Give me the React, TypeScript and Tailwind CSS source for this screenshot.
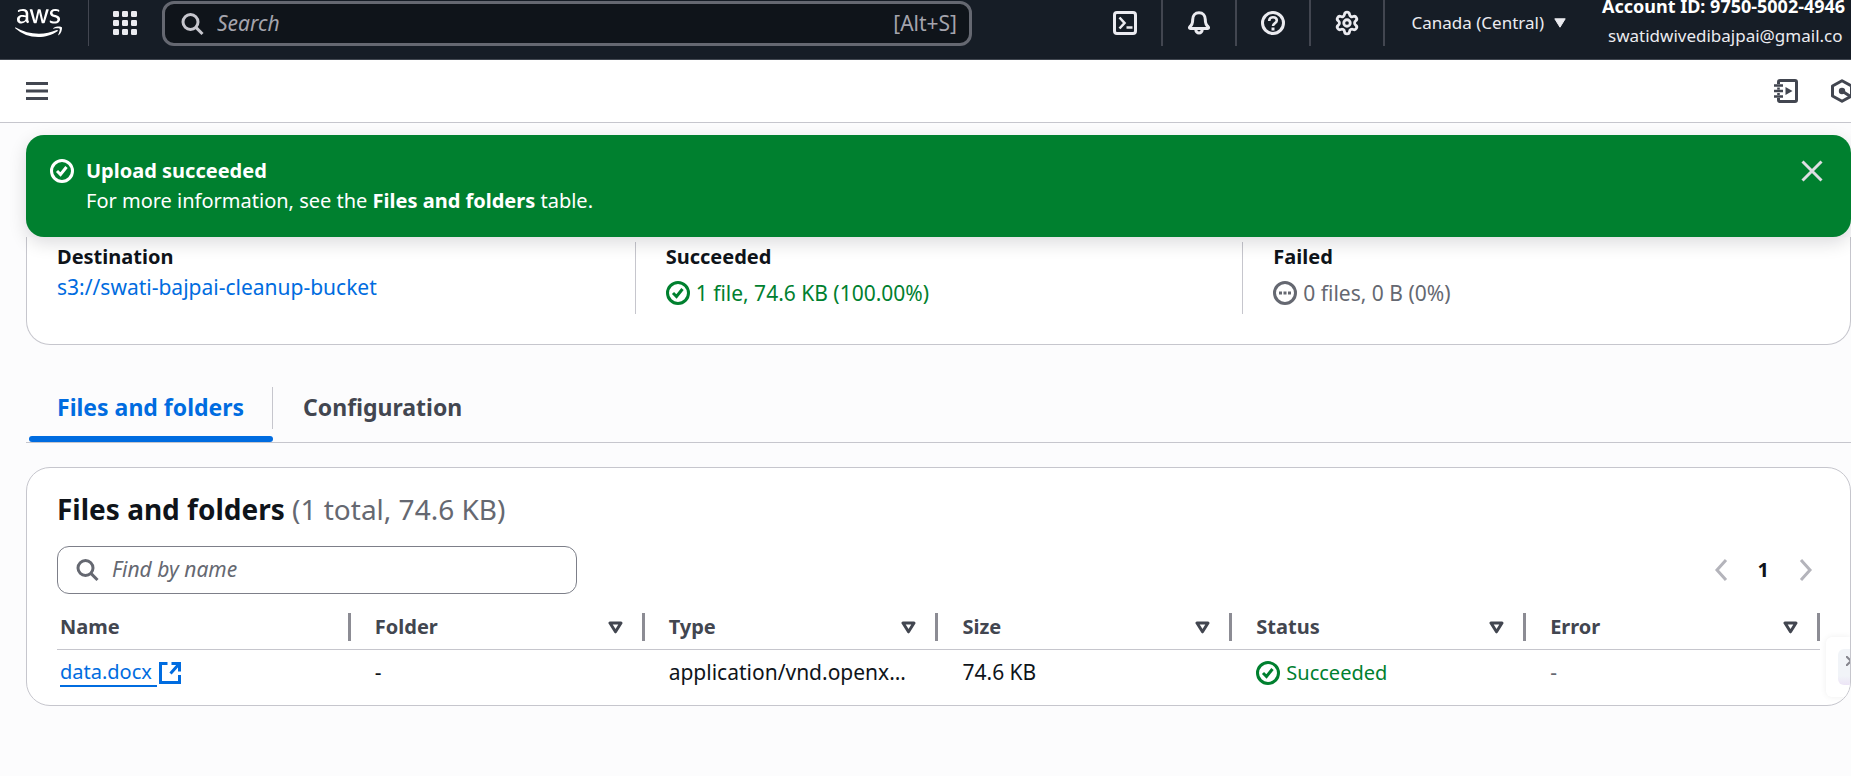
import type { ReactNode } from 'react';
import { Settings } from 'lucide-react';
import { FaAws } from 'react-icons/fa';

type IconProps = { className?: string };

function Glyph({ className = '', children }: IconProps & { children: ReactNode }) {
  return (
    <svg
      viewBox="0 0 24 24"
      fill="none"
      stroke="currentColor"
      strokeWidth="3"
      className={`size-6 shrink-0 ${className}`}
      aria-hidden="true"
    >
      {children}
    </svg>
  );
}

function SearchIcon({ className }: IconProps) {
  return (
    <Glyph className={className}>
      <circle cx="9.500" cy="10" r="7.5" />
      <path d="m14.900 15.4 6.600 6.6" />
    </Glyph>
  );
}

function CheckCircle({ className }: IconProps) {
  return (
    <Glyph className={className}>
      <circle cx="12" cy="12" r="10.5" />
      <path d="m7 12 3.5 3.5 6-7.5" />
    </Glyph>
  );
}

function PendingCircle({ className }: IconProps) {
  return (
    <Glyph className={className}>
      <circle cx="12" cy="12" r="10.5" />
      <path d="M6 12h3M10.500 12h3M15 12h3" />
    </Glyph>
  );
}

function AppGrid() {
  return (
    <svg viewBox="0 0 24 24" fill="currentColor" className="size-6" aria-hidden="true">
      {[0, 9, 18].map((y) => [0, 9, 18].map((x) => <rect key={`${x}-${y}`} x={x} y={y} width="6" height="6" rx="1.2" />))}
    </svg>
  );
}

function HeaderButton({ label, children }: { label: string; children: ReactNode }) {
  return (
    <button type="button" aria-label={label} className="flex h-full w-[74px] items-center justify-center border-r-2 border-[#424650]">
      {children}
    </button>
  );
}

function Header() {
  return (
    <header className="h-[60px] overflow-hidden border-b border-[#414750] bg-[#161d26] text-[#ebebf0]">
      <div className="flex h-[46px] items-center">
        <a href="#home" aria-label="AWS home" className="flex h-full w-[89px] shrink-0 items-center border-r border-[#424650] pl-[15px] text-white">
          <FaAws className="h-[38px] w-[47px]" />
        </a>
        <button type="button" aria-label="Services" className="flex w-[73px] shrink-0 items-center justify-center pr-0.5">
          <AppGrid />
        </button>
        <div className="mt-px flex h-[45px] w-[810px] items-center rounded-xl border-3 border-[#656871] bg-[#0f141a] pr-3 pl-4">
          <SearchIcon className="text-[#c6c6cd]" />
          <input
            type="search"
            aria-label="Search"
            placeholder="Search"
            className="ml-3 min-w-0 flex-1 bg-transparent text-[21px] italic outline-none placeholder:text-[#a4a4ad]"
          />
          <span className="text-[21px] text-[#a4a4ad]">[Alt+S]</span>
        </div>
        <nav aria-label="Account tools" className="ml-auto flex h-full shrink-0 items-center">
          <HeaderButton label="CloudShell">
            <Glyph>
              <rect x="1.5" y="1.5" width="21" height="21" rx="2.500" />
              <path d="m6.500 6.500 5 5.500-5 5.500M13.500 16.500h6" strokeWidth="2.600" />
            </Glyph>
          </HeaderButton>
          <HeaderButton label="Notifications">
            <Glyph>
              <path
                d="M12 1.800c-4 0-6.300 2.900-6.300 6.700 0 3.900-1 5.900-2.900 7.300-.7.600-.5 1.700.6 1.700h17.200c1.100 0 1.300-1.100.6-1.700-1.900-1.400-2.900-3.400-2.900-7.300 0-3.800-2.300-6.700-6.300-6.700Z"
                strokeLinejoin="round"
              />
              <path d="M8.800 18.500c0 2 1.400 3.600 3.200 3.600s3.200-1.600 3.200-3.600" />
            </Glyph>
          </HeaderButton>
          <HeaderButton label="Help">
            <Glyph>
              <circle cx="12" cy="12" r="10.5" />
              <path d="M8.200 10c0-2.300 1.500-3.700 3.800-3.700s3.800 1.300 3.800 3.200c0 2.800-3.800 2.500-3.800 5.600" strokeWidth="2.600" />
              <path d="M12 16.500v3" />
            </Glyph>
          </HeaderButton>
          <HeaderButton label="Settings">
            <Settings className="size-[26px]" strokeWidth={2.6} />
          </HeaderButton>
          <button type="button" className="flex items-center gap-2.5 pr-9 pl-[26px] text-[17px]">
            <span className="whitespace-nowrap">Canada (Central)</span>
            <svg viewBox="0 0 12 10" fill="currentColor" stroke="currentColor" strokeLinejoin="round" className="h-[10px] w-3" aria-hidden="true">
              <path d="M.8.8h10.400L6 9.200Z" />
            </svg>
          </button>
          <button type="button" className="mb-1 w-[249px] text-left leading-[29px] whitespace-nowrap">
            <span className="block text-[18px] font-bold text-white">Account ID: 9750-5002-4946</span>
            <span className="block pl-[6px] text-[17px]">swatidwivedibajpai@gmail.co</span>
          </button>
        </nav>
      </div>
    </header>
  );
}

function Toolbar() {
  return (
    <div className="flex h-[63px] items-center justify-between overflow-hidden border-b border-[#c6c6cd] bg-white pl-[25px] text-[#424650]">
      <button type="button" aria-label="Open navigation">
        <Glyph>
          <path d="M1 4.500h22M1 12h22M1 19.500h22" />
        </Glyph>
      </button>
      <div className="-mr-[3px] flex items-center gap-8">
        <button type="button" aria-label="Tutorials">
          <Glyph>
            <path d="M4.500 5V3c0-1 .5-1.500 1.500-1.500h15c1 0 1.500.5 1.500 1.500v18c0 1-.5 1.500-1.500 1.500H6c-1 0-1.500-.5-1.500-1.500v-2" />
            <path d="M0 6.500h9M0 12h9M0 17.500h9M4.500 8.500v2M4.500 14v2" strokeWidth="2.600" />
            <path d="M11.500 8v8l7-4Z" fill="currentColor" stroke="none" />
          </Glyph>
        </button>
        <button type="button" aria-label="Page insights">
          <Glyph>
            <path d="M12 1.700 21.500 7v10L12 22.300 2.500 17V7Z" strokeLinejoin="round" />
            <circle cx="12" cy="12" r="3.200" fill="currentColor" stroke="none" />
            <path d="m12 12 8.500 5.500" />
          </Glyph>
        </button>
      </div>
    </div>
  );
}

function Flash() {
  return (
    <section
      role="status"
      className="relative z-10 flex items-start rounded-[18px] bg-[#00802f] py-[21px] pr-[27px] pl-6 leading-[30px] text-white shadow-[0_6px_18px_rgba(0,7,22,0.14)]"
    >
      <CheckCircle className="mt-[3px]" />
      <div className="ml-3 flex-1 text-[20px]">
        <h2 className="font-bold">Upload succeeded</h2>
        <p>
          For more information, see the <strong className="font-bold">Files and folders</strong> table.
        </p>
      </div>
      <button type="button" aria-label="Dismiss" className="mt-[3px] text-[#dedee3]">
        <Glyph>
          <path d="m2.500 2.500 19 19M21.500 2.500l-19 19" />
        </Glyph>
      </button>
    </section>
  );
}

function Summary() {
  return (
    <section className="rounded-b-3xl border border-t-0 border-[#c6c6cd] bg-white pt-[5px] pb-[30px] text-[21px] leading-[30px]">
      <dl className="grid grid-cols-3">
        <div className="px-[30px] pb-[6px]">
          <dt className="text-[20px] font-bold">Destination</dt>
          <dd>
            <a href="#bucket" className="text-[#006ce0]">s3://swati-bajpai-cleanup-bucket</a>
          </dd>
        </div>
        <div className="border-l border-[#c6c6cd] px-[30px] pb-[6px]">
          <dt className="text-[20px] font-bold">Succeeded</dt>
          <dd className="mt-[6px] flex items-center gap-[6px] text-[#00802f]">
            <CheckCircle />
            1 file, 74.6 KB (100.00%)
          </dd>
        </div>
        <div className="border-l border-[#c6c6cd] px-[30px] pb-[6px]">
          <dt className="text-[20px] font-bold">Failed</dt>
          <dd className="mt-[6px] flex items-center gap-[6px] text-[#656871]">
            <PendingCircle />
            0 files, 0 B (0%)
          </dd>
        </div>
      </dl>
    </section>
  );
}

function Tabs() {
  return (
    <div role="tablist" className="mt-[34px] flex border-b border-[#c6c6cd] pl-[3px] text-[23px] font-bold">
      <button type="button" role="tab" aria-selected="true" className="flex flex-col text-[#006ce0]">
        <span className="flex h-[57px] items-center">
          <span className="flex h-[42px] items-center border-r border-[#c6c6cd] px-7">Files and folders</span>
        </span>
        <span className="h-[6px] w-full rounded-full bg-[#006ce0]" />
      </button>
      <button type="button" role="tab" aria-selected="false" className="flex h-[57px] items-center px-[30px] text-[#424650]">
        Configuration
      </button>
    </div>
  );
}

const columns = ['Name', 'Folder', 'Type', 'Size', 'Status', 'Error'];

function FilterTriangle() {
  return (
    <svg viewBox="0 0 15 13" fill="none" stroke="currentColor" strokeWidth="3" strokeLinejoin="round" className="h-[13px] w-[15px]" aria-hidden="true">
      <path d="M2 2h11L7.500 10.800Z" />
    </svg>
  );
}

function FilesTable() {
  return (
    <table className="mt-3 w-full table-fixed border-collapse text-left text-[21px]">
      <thead className="text-[20px] text-[#424650]">
        <tr className="h-[43px] border-b border-[#c6c6cd]">
          {columns.map((name, i) => (
            <th key={name} scope="col" className="p-0">
              <div className={`flex h-7 items-center justify-between border-r-3 border-[#8c8c94] pr-[19px] ${i === 0 ? 'pl-[3px]' : 'pl-6'}`}>
                {name}
                {i > 0 && (
                  <button type="button" aria-label={`Sort by ${name}`}>
                    <FilterTriangle />
                  </button>
                )}
              </div>
            </th>
          ))}
        </tr>
      </thead>
      <tbody>
        <tr className="h-[47px]">
          <td className="p-0 pl-[3px]">
            <a href="#data" className="flex items-center text-[20px] text-[#006ce0]">
              <span className="border-b-2 border-[#006ce0] pr-[5px] leading-[26px]">data.docx</span>
              <Glyph className="ml-px">
                <path d="M9.500 2.500H2.500v19h19V14" />
                <path d="M13.500 2.500h8v8M21 3l-8.500 9.500" />
              </Glyph>
            </a>
          </td>
          <td className="p-0 pl-6">-</td>
          <td className="p-0 pl-6 whitespace-nowrap">application/vnd.openx…</td>
          <td className="p-0 pl-6">74.6 KB</td>
          <td className="p-0 pl-6">
            <span className="flex items-center gap-[6px] text-[20px] text-[#00802f]">
              <CheckCircle />
              Succeeded
            </span>
          </td>
          <td className="p-0 pl-6 text-[#656871]">-</td>
        </tr>
      </tbody>
    </table>
  );
}

function FilesPanel() {
  return (
    <section className="relative mt-6 overflow-hidden rounded-3xl border border-[#c6c6cd] bg-white px-[30px] pt-[23px] pb-[9px]">
      <h2 className="text-[28px] leading-9 font-bold">
        Files and folders <span className="font-normal text-[#656871]">(1 total, 74.6 KB)</span>
      </h2>
      <div className="mt-[19px] flex items-center justify-between">
        <div className="flex h-12 w-[520px] items-center gap-3 rounded-xl border border-[#7d7f89] px-[18px] text-[#656871]">
          <SearchIcon />
          <input
            type="search"
            aria-label="Find by name"
            placeholder="Find by name"
            className="min-w-0 flex-1 bg-transparent text-[21px] italic outline-none placeholder:text-[#656871]"
          />
        </div>
        <nav aria-label="Pagination" className="flex items-center gap-[25px] pr-0.5 text-[#b4b4bb]">
          <button type="button" aria-label="Previous page">
            <Glyph>
              <path d="m17 2-9 10 9 10" />
            </Glyph>
          </button>
          <button type="button" aria-current="page" className="text-[20px] font-bold text-[#0f141a]">1</button>
          <button type="button" aria-label="Next page">
            <Glyph>
              <path d="m7 2 9 10-9 10" />
            </Glyph>
          </button>
        </nav>
      </div>
      <FilesTable />
      <div className="absolute right-0 bottom-2 flex h-[60px] w-6 items-center justify-end rounded-l-md bg-white shadow-[0_0_6px_rgba(0,0,0,0.07)]">
        <button
          type="button"
          aria-label="Close side panel"
          className="flex h-9 w-3 items-center justify-end overflow-hidden rounded-l-md bg-linear-to-b from-[#f1f4f8] from-75% to-[#ece4f6] text-[#85858d]"
        >
          <svg viewBox="0 0 4 10" fill="none" stroke="currentColor" strokeWidth="2" className="mb-3 h-[10px] w-1" aria-hidden="true">
            <path d="m0 0 5 5-5 5M5 4v2" />
          </svg>
        </button>
      </div>
    </section>
  );
}

export default function App() {
  return (
    <div className="min-h-screen overflow-x-hidden bg-[#fcfcfd] font-['Noto_Sans',sans-serif] text-[#0f141a]">
      <Header />
      <Toolbar />
      <main className="pt-3 pl-[26px]">
        <Flash />
        <Summary />
        <Tabs />
        <FilesPanel />
      </main>
    </div>
  );
}
